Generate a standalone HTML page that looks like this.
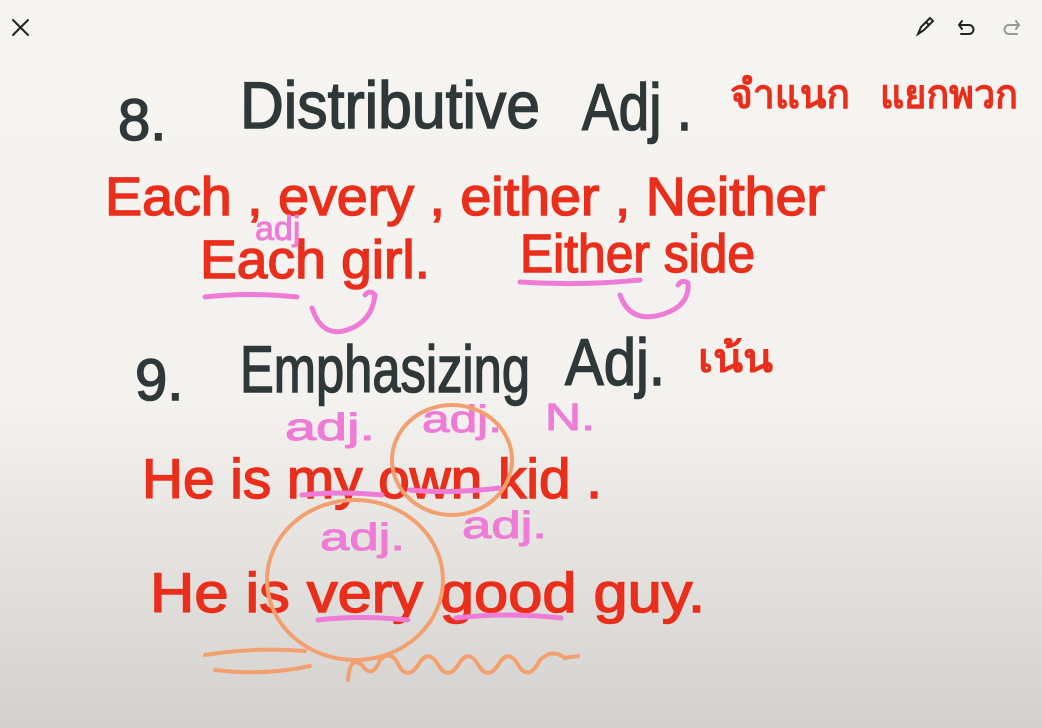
<!DOCTYPE html>
<html><head><meta charset="utf-8"><style>
html,body{margin:0;padding:0}
body{width:1042px;height:728px;overflow:hidden;background:linear-gradient(#f6f4f1 0%,#f4f2ef 55%,#dedcd9 85%,#d3d1ce 100%);font-family:"Liberation Sans",sans-serif}
svg{position:absolute;left:0;top:0}
</style></head><body>
<svg width="1042" height="728" viewBox="0 0 1042 728" xmlns="http://www.w3.org/2000/svg">
<g stroke="#222" stroke-width="2" fill="none" stroke-linecap="round">
<path d="M13 20L28 35M28 20L13 35"/>
<path d="M918 34l3-7 9-9 3 3-9 9z M926 22l3 3"/>
<path d="M962 21l-3 4 3 4M959 25h10a4.5 4.5 0 0 1 0 9h-8"/>
</g>
<path d="M1016 21l3 4-3 4M1019 25h-10a4.5 4.5 0 0 0 0 9h8" stroke="#999" stroke-width="2" fill="none" stroke-linecap="round"/>
<g font-family="Liberation Sans Narrow, Liberation Sans, sans-serif">
<g fill="#2f3838" stroke="#2f3838" stroke-width="1.5" font-size="66">
<text x="118" y="140" font-size="58">8.</text>
<text x="240" y="128" textLength="300" lengthAdjust="spacingAndGlyphs">Distributive</text>
<text x="582" y="130" textLength="110" lengthAdjust="spacingAndGlyphs">Adj .</text>
<text x="135" y="400" font-size="58">9.</text>
<text x="240" y="392" textLength="290" lengthAdjust="spacingAndGlyphs">Emphasizing</text>
<text x="565" y="385" textLength="100" lengthAdjust="spacingAndGlyphs">Adj.</text>
</g>
<g fill="#ea2e1c" stroke="#ea2e1c" stroke-width="1.5">
<text x="730" y="108" font-size="40" textLength="120" lengthAdjust="spacingAndGlyphs">จำแนก</text>
<text x="880" y="108" font-size="40" textLength="138" lengthAdjust="spacingAndGlyphs">แยกพวก</text>
<text x="105" y="215" font-size="54" textLength="720" lengthAdjust="spacingAndGlyphs">Each , every , either , Neither</text>
<text x="200" y="278" font-size="54" textLength="230" lengthAdjust="spacingAndGlyphs">Each girl.</text>
<text x="520" y="272" font-size="54" textLength="235" lengthAdjust="spacingAndGlyphs">Either side</text>
<text x="698" y="372" font-size="40" textLength="75" lengthAdjust="spacingAndGlyphs">เน้น</text>
<text x="142" y="498" font-size="56" textLength="460" lengthAdjust="spacingAndGlyphs">He is my own kid .</text>
<text x="150" y="612" font-size="56" textLength="555" lengthAdjust="spacingAndGlyphs">He is very good guy.</text>
</g>
<g fill="#ee7cd6" stroke="#ee7cd6" stroke-width="1" font-size="38">
<text x="255" y="240" font-size="34">adj</text>
<text x="285" y="440" textLength="90" lengthAdjust="spacingAndGlyphs">adj.</text>
<text x="422" y="432" textLength="80" lengthAdjust="spacingAndGlyphs">adj.</text>
<text x="545" y="430" textLength="50" lengthAdjust="spacingAndGlyphs">N.</text>
<text x="320" y="550" textLength="85" lengthAdjust="spacingAndGlyphs">adj.</text>
<text x="462" y="538" textLength="85" lengthAdjust="spacingAndGlyphs">adj.</text>
</g>
<g stroke="#ee7cd6" stroke-width="5" fill="none" stroke-linecap="round">
<path d="M205 297q45-5 92 0"/>
<path d="M520 282q60 4 120-2"/>
<path d="M312 308q10 30 35 22t28-35q-5-6-10 0"/>
<path d="M620 295q10 28 40 20t28-32q-6-4-10 2"/>
<path d="M302 495q40-4 80 0"/>
<path d="M410 490q40 4 90-2"/>
<path d="M318 620q40-5 90 0"/>
<path d="M456 618q50-6 105 0"/>
</g>
<g stroke="#f2a070" stroke-width="4" fill="none" stroke-linecap="round">
<ellipse cx="452" cy="460" rx="60" ry="55"/>
<ellipse cx="355" cy="580" rx="88" ry="80"/>
<path d="M205 655q50-8 100-4M215 670q50 6 95-4"/>
<path d="M348 680Q350 655 362 665Q372 680 380 660Q392 648 400 668Q410 680 420 662Q430 648 440 668Q450 680 460 662Q470 648 480 668Q490 680 500 662Q510 648 520 668Q530 680 540 660Q552 648 565 658L578 656"/>
</g>
</g>
</svg>
</body></html>
